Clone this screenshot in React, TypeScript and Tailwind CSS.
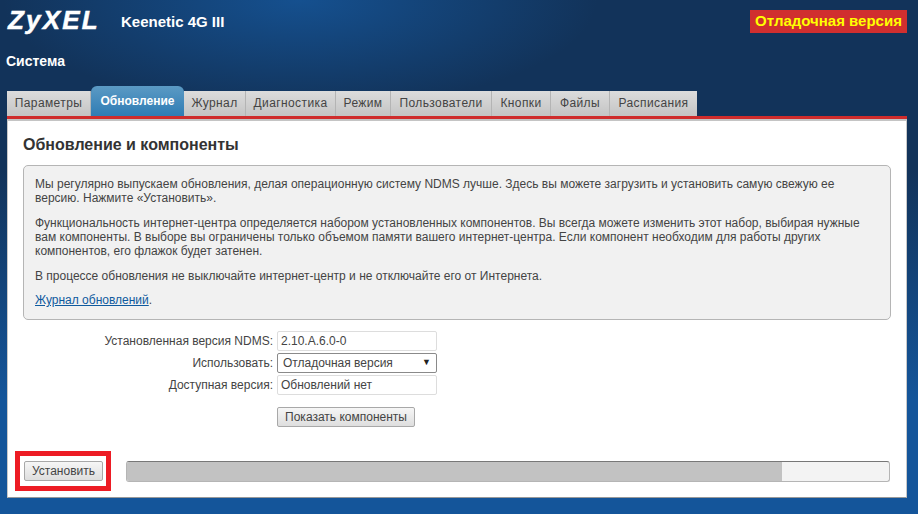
export default function App() {
  // Tabs of the system page, widths read from the screenshot
  const TABS = [
    { label: "Параметры", width: "w-[84px]" },
    { label: "Обновление", width: "w-[93px]" },
    { label: "Журнал", width: "w-[62px]" },
    { label: "Диагностика", width: "w-[90px]" },
    { label: "Режим", width: "w-[55px]" },
    { label: "Пользователи", width: "w-[101px]" },
    { label: "Кнопки", width: "w-[59px]" },
    { label: "Файлы", width: "w-[59px]" },
    { label: "Расписания", width: "w-[87px]" },
  ];
  const ACTIVE = "Обновление";

  return (
    <div className="relative h-[514px] w-full overflow-hidden bg-[linear-gradient(180deg,#12335a_0px,#12335a_170px,#14559a_400px,#14559a_514px)] font-['Liberation_Sans',Arial,sans-serif]">
      <div className="absolute left-0 top-0 h-[110px] w-[600px] bg-[radial-gradient(ellipse_at_50%_0%,#15508f_0%,#15508f00_70%)]" />

      <div className="relative flex h-full flex-col pl-[7px] pr-[11px]">
        {/* Header */}
        <div className="flex h-[49px] items-start justify-between">
          <div className="flex items-start">
            <div className="ml-px mt-[4px] w-[113px] text-[26px] font-bold italic leading-[32px] tracking-[2.2px] text-white [-webkit-text-stroke:0.5px_white]">ZyXEL</div>
            <div className="mt-[14px] text-[15px] font-bold leading-[16px] text-white">Keenetic 4G III</div>
          </div>
          <div className="mt-[10px] flex h-[23px] w-[157px] items-center justify-center whitespace-nowrap bg-[#d02f2f] text-[15px] font-bold text-[#ffff00]">Отладочная версия</div>
        </div>
        <div className="-ml-px h-[37px] pt-[4px] text-[14px] font-bold leading-[16px] text-white">Система</div>

        {/* Tabs */}
        <div className="flex h-[30px] items-end">
          {TABS.map((tab) =>
            tab.label === ACTIVE ? (
              <div key={tab.label} className={`flex h-[30px] justify-center rounded-t-[6px] bg-[linear-gradient(180deg,#5b9ac4,#2f7cb4)] pt-[8px] text-[12px] font-bold leading-[15px] text-white ${tab.width}`}>
                {tab.label}
              </div>
            ) : (
              <div key={tab.label} className={`flex h-[25px] items-center justify-center border-r border-[#b4b4b4] bg-[linear-gradient(180deg,#dcdcdc,#c4c4c4)] text-[12px] leading-[15px] tracking-[0.4px] text-[#444444] last:border-r-0 ${tab.width}`}>
                {tab.label}
              </div>
            )
          )}
        </div>
        <div className="h-[3px] bg-[#cf2c2c]" />

        {/* Panel */}
        <div className="flex h-[379px] flex-col border border-t-2 border-[#c8c8c8] border-t-[#c4c4c4] border-b-[#999999] bg-white px-[15px]">
          <h2 className="mt-[14px] text-[16px] font-bold leading-[20px] text-[#333333]">Обновление и компоненты</h2>
          <div className="mt-[10px] h-[155px] rounded-[5px] border border-[#b5b5b5] bg-[#f1f1f1] px-[11px] pt-[11px] text-[12px] leading-[14px] text-[#444444]">
            <p>Мы регулярно выпускаем обновления, делая операционную систему NDMS лучше. Здесь вы можете загрузить и установить самую свежую ее версию. Нажмите «Установить».</p>
            <p className="mt-[11px]">Функциональность интернет-центра определяется набором установленных компонентов. Вы всегда можете изменить этот набор, выбирая нужные вам компоненты. В выборе вы ограничены только объемом памяти вашего интернет-центра. Если компонент необходим для работы других компонентов, его флажок будет затенен.</p>
            <p className="mt-[11px]">В процессе обновления не выключайте интернет-центр и не отключайте его от Интернета.</p>
            <p className="mt-[10px]"><a className="text-[#0f5a9e] underline">Журнал обновлений</a>.</p>
          </div>

          {/* Version form */}
          <div className="mt-[11px] flex flex-col gap-[2px]">
            <div className="flex h-[20px] items-center">
              <div className="w-[254px] pr-[4px] text-right text-[12px] text-[#444444]">Установленная версия NDMS:</div>
              <div className="flex h-[20px] w-[160px] items-center rounded-[2px] border border-[#dddddd] bg-white pl-[3px] text-[12px] text-[#444444]">2.10.A.6.0-0</div>
            </div>
            <div className="flex h-[20px] items-center">
              <div className="w-[254px] pr-[4px] text-right text-[12px] text-[#444444]">Использовать:</div>
              <div className="flex h-[20px] w-[160px] items-center justify-between rounded-[2px] border border-[#8a8a8a] bg-white px-[5px] text-[12px] text-[#444444]">
                <span>Отладочная версия</span>
                <span className="text-[9px] text-[#222222]">▼</span>
              </div>
            </div>
            <div className="flex h-[20px] items-center">
              <div className="w-[254px] pr-[4px] text-right text-[12px] text-[#444444]">Доступная версия:</div>
              <div className="flex h-[20px] w-[160px] items-center rounded-[2px] border border-[#dddddd] bg-white pl-[3px] text-[12px] text-[#444444]">Обновлений нет</div>
            </div>
          </div>
          <button className="ml-[254px] mt-[12px] h-[20px] w-[138px] rounded-[2px] border border-[#a8a8a8] bg-[linear-gradient(180deg,#f6f6f6,#dedede)] text-[12px] leading-[15px] text-[#444444]">Показать компоненты</button>

          {/* Bottom bar */}
          <div className="mt-[24px] flex items-start">
            <div className="-ml-[8px] border-[5px] border-[#ed1c24] py-[5px] pl-[4px] pr-[3px]">
              <button className="block h-[20px] w-[79px] rounded-[2px] border border-[#a8a8a8] bg-[linear-gradient(180deg,#f6f6f6,#dedede)] text-[12px] leading-[15px] text-[#444444]">Установить</button>
            </div>
            <div className="ml-[15px] mt-[10px] flex h-[21px] w-[764px] overflow-hidden rounded-[3px] border border-[#b5b5b5] border-t-[#777777] bg-[#f3f3f3]">
              <div className="h-full w-[655px] bg-[#c2c2c2]" />
            </div>
          </div>
        </div>
      </div>
    </div>
  );
}
